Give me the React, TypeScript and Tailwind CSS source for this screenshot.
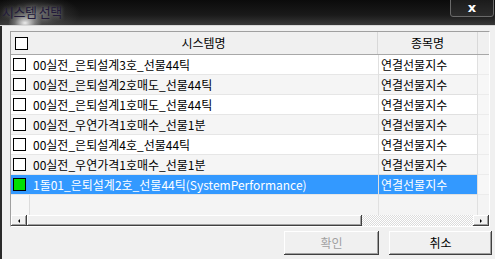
import React from 'react';

const rows = [
  '00실전_은퇴설계3호_선물44틱',
  '00실전_은퇴설계2호매도_선물44틱',
  '00실전_은퇴설계1호매도_선물44틱',
  '00실전_우연가격1호매수_선물1분',
  '00실전_은퇴설계4호_선물44틱',
  '00실전_우연가격1호매수_선물1분',
  '1돌01_은퇴설계2호_선물44틱(SystemPerformance)',
];

const font = 'font-["Noto_Sans_CJK_KR","Noto_Sans",sans-serif]';

const Check = ({ on }: { on?: boolean }) => (
  <div className={`w-[13px] h-[13px] border border-black ${on ? 'bg-[#00e000]' : 'bg-white'}`} />
);

const raised =
  'bg-[#f0f0f0] shadow-[inset_-1px_-1px_#404040,inset_1px_1px_#ffffff,inset_-2px_-2px_#a0a0a0]';

export default function App() {
  return (
    <div className={`w-[495px] h-[259px] flex flex-col bg-[#f0f0f0] overflow-hidden ${font}`}>
      {/* title bar */}
      <div className="relative h-[26px] shrink-0 flex items-start overflow-hidden bg-[linear-gradient(to_bottom,#0b0b0b,#1a1a1a_60%,#383838)] border-b border-[#d8d8d8]">
        <div className="absolute left-[-10px] top-[-6px] w-[90px] h-[40px] rounded-full bg-[radial-gradient(closest-side,rgba(200,200,200,0.45),rgba(120,120,120,0.15)_65%,transparent)]" />
        <div className="absolute left-[8px] top-[12px] w-[34px] h-[22px] rounded-full bg-[radial-gradient(closest-side,rgba(255,255,255,0.9),rgba(255,255,255,0.25)_60%,transparent)]" />
        <span className="relative pl-[2px] pt-[3px] text-[13px] leading-[18px] tracking-[-0.5px] text-[#221a3a] [text-shadow:0_0_4px_rgba(255,255,255,0.4)]">
          시스템 선택
        </span>
        <div className="ml-auto mr-[1px] mt-[-2px] w-[44px] h-[19px] rounded-b-[3px] border border-[#6a6a6a] bg-[linear-gradient(to_bottom,#1a1a1a,#2c2c2c)] flex items-center justify-center">
          <span className="text-white text-[13px] font-bold leading-none font-['DejaVu_Sans',sans-serif]">x</span>
        </div>
      </div>

      <div className="flex-1 flex flex-col border-l-2 border-[#2a2a2a]">
        {/* list view */}
        <div className="ml-[8px] mt-[5px] w-[480px] border border-[#a0a0a0] border-r-white border-b-white bg-white flex flex-col text-[12px] text-black">
          {/* header */}
          <div className="h-[23px] flex items-center bg-[#f0f0f0] border-b border-[#a8a8a8]">
            <div className="w-[19px] h-full flex items-center pl-[4px]">
              <Check />
            </div>
            <div className="w-[348px] h-full flex items-center justify-center border-r border-[#d8d8d8]">시스템명</div>
            <div className="w-[100px] h-full flex items-center justify-center border-r border-[#d8d8d8]">종목명</div>
            <div className="flex-1 h-full" />
          </div>

          {rows.map((name, i) => {
            const sel = i === rows.length - 1;
            const bg = sel ? 'bg-[#3399ff] text-white' : i % 2 === 1 ? 'bg-[#f5f5f5]' : 'bg-white';
            return (
              <div key={i} className="h-[20px] flex">
                <div className={`w-[367px] flex items-center border-b border-[#e6e6e6] ${bg}`}>
                  <div className="w-[19px] pl-[2px]">
                    <Check on={sel} />
                  </div>
                  <span className="pl-[3px] leading-[20px] whitespace-nowrap">{name}</span>
                </div>
                <div className={`w-[100px] flex items-center pl-[2px] border-l border-r border-b border-[#e0e0e0] ${bg}`}>
                  연결선물지수
                </div>
                <div className="flex-1 bg-[#f7f7f7] border-b border-[#ececec]" />
              </div>
            );
          })}

          {/* empty row */}
          <div className="h-[20px] flex bg-[#f4f4f4]">
            <div className="w-[19px] border-r border-[#dcdcdc] bg-[#f7f7f7]" />
            <div className="w-[348px]" />
            <div className="w-[100px] border-l border-r border-[#e0e0e0]" />
            <div className="flex-1" />
          </div>

          {/* horizontal scrollbar */}
          <div className="h-[11px] flex bg-[#f0f0f0]">
            <div className={`w-[16px] flex items-center justify-center ${raised}`}>
              <div className="w-0 h-0 border-y-[2px] border-y-transparent border-r-[2px] border-r-black" />
            </div>
            <div className={`w-[335px] ${raised}`} />
            <div className="flex-1 bg-[repeating-conic-gradient(#ffffff_0_25%,#dcdcdc_0_50%)] bg-[length:2px_2px]" />
            <div className={`w-[16px] flex items-center justify-center ${raised}`}>
              <div className="w-0 h-0 border-y-[2px] border-y-transparent border-l-[2px] border-l-black" />
            </div>
          </div>
        </div>

        {/* buttons */}
        <div className="mt-[4px] flex justify-end gap-[10px] pr-[3px]">
          <button className={`w-[95px] h-[24px] text-[12px] text-[#a0a0a0] ${raised}`}>확인</button>
          <button className={`w-[103px] h-[24px] text-[12px] text-black ${raised}`}>취소</button>
        </div>
      </div>
    </div>
  );
}
